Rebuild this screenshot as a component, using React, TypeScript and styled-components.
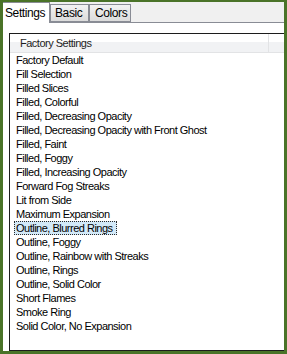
import React from "react"
import styled, { createGlobalStyle } from "styled-components"

const GlobalStyle = createGlobalStyle`
    html, body {
        margin: 0;
        padding: 0;
        background: #ffffff;
    }
    body {
        font-family: "Liberation Sans", Arial, sans-serif;
        font-size: 11px;
        letter-spacing: -0.5px;
        color: #000;
    }
`

const Frame = styled.div`
    box-sizing: border-box;
    width: 287px;
    height: 354px;
    border-style: solid;
    border-color: #4a7328;
    border-width: 2px 3px 3px 3px;
    background: #ffffff;
    overflow: hidden;
    display: flex;
    flex-direction: column;
`

const TabStrip = styled.div`
    height: 20px;
    display: flex;
    align-items: flex-end;
    background: #f0f0f0;
`

const Tab = styled.div<{ $active?: boolean; $width: number; $pad: number }>`
    box-sizing: border-box;
    width: ${p => p.$width}px;
    height: ${p => (p.$active ? 21 : 18)}px;
    margin-bottom: ${p => (p.$active ? -1 : 0)}px;
    padding-left: ${p => p.$pad}px;
    display: flex;
    align-items: center;
    border: 1px solid #898c95;
    border-bottom: ${p => (p.$active ? "none" : "1px solid #898c95")};
    border-left: ${p => (p.$active ? "none" : "1px solid #898c95")};
    background: ${p => (p.$active ? "#ffffff" : "linear-gradient(#f3f3f3, #e6e6e6 50%, #dcdcdc)")};
    position: relative;
    z-index: ${p => (p.$active ? 1 : 0)};
    white-space: nowrap;
    font-size: 12px;
    letter-spacing: -0.4px;
`

const Panel = styled.div`
    flex: 1;
    display: flex;
    border-top: 1px solid #898c95;
    padding: 10px 0 0 6px;
    min-height: 0;
`

const ListBox = styled.div`
    flex: 1;
    margin-right: -8px;
    border: 1px solid #1c1c1c;
    display: flex;
    flex-direction: column;
`

const HeaderRow = styled.div`
    height: 18px;
    display: flex;
    border-bottom: 1px solid #e2e3e5;
    background: linear-gradient(#ffffff 0%, #ffffff 45%, #f1f2f4 45%, #f1f2f4 100%);
`

const HeaderCell = styled.div`
    box-sizing: border-box;
    width: 259px;
    padding-left: 10px;
    display: flex;
    align-items: center;
    border-right: 1px solid #e2e3e5;
    color: #1e1e1e;
`

const Rows = styled.div`
    display: flex;
    flex-direction: column;
`

const Row = styled.div`
    height: 14px;
    display: flex;
    padding-left: 4px;
`

const Item = styled.div<{ $selected?: boolean }>`
    box-sizing: border-box;
    height: 14px;
    line-height: 12px;
    padding: 0 3px 0 1px;
    border: 1px ${p => (p.$selected ? "dotted #2a2a2a" : "solid transparent")};
    background: ${p => (p.$selected ? "#d3e9f8" : "transparent")};
    white-space: nowrap;
`

const items = [
    "Factory Default",
    "Fill Selection",
    "Filled Slices",
    "Filled, Colorful",
    "Filled, Decreasing Opacity",
    "Filled, Decreasing Opacity with Front Ghost",
    "Filled, Faint",
    "Filled, Foggy",
    "Filled, Increasing Opacity",
    "Forward Fog Streaks",
    "Lit from Side",
    "Maximum Expansion",
    "Outline, Blurred Rings",
    "Outline, Foggy",
    "Outline, Rainbow with Streaks",
    "Outline, Rings",
    "Outline, Solid Color",
    "Short Flames",
    "Smoke Ring",
    "Solid Color, No Expansion",
]

const App = () => {
    return (
        <>
            <GlobalStyle />
            <Frame>
                <TabStrip>
                    <Tab $active $width={47} $pad={2}>Settings</Tab>
                    <Tab $width={39} $pad={4}>Basic</Tab>
                    <Tab $width={42} $pad={5}>Colors</Tab>
                </TabStrip>
                <Panel>
                    <ListBox>
                        <HeaderRow>
                            <HeaderCell>Factory Settings</HeaderCell>
                        </HeaderRow>
                        <Rows>
                            {items.map(name => (
                                <Row key={name}>
                                    <Item $selected={name === "Outline, Blurred Rings"}>{name}</Item>
                                </Row>
                            ))}
                        </Rows>
                    </ListBox>
                </Panel>
            </Frame>
        </>
    )
}

export default App
